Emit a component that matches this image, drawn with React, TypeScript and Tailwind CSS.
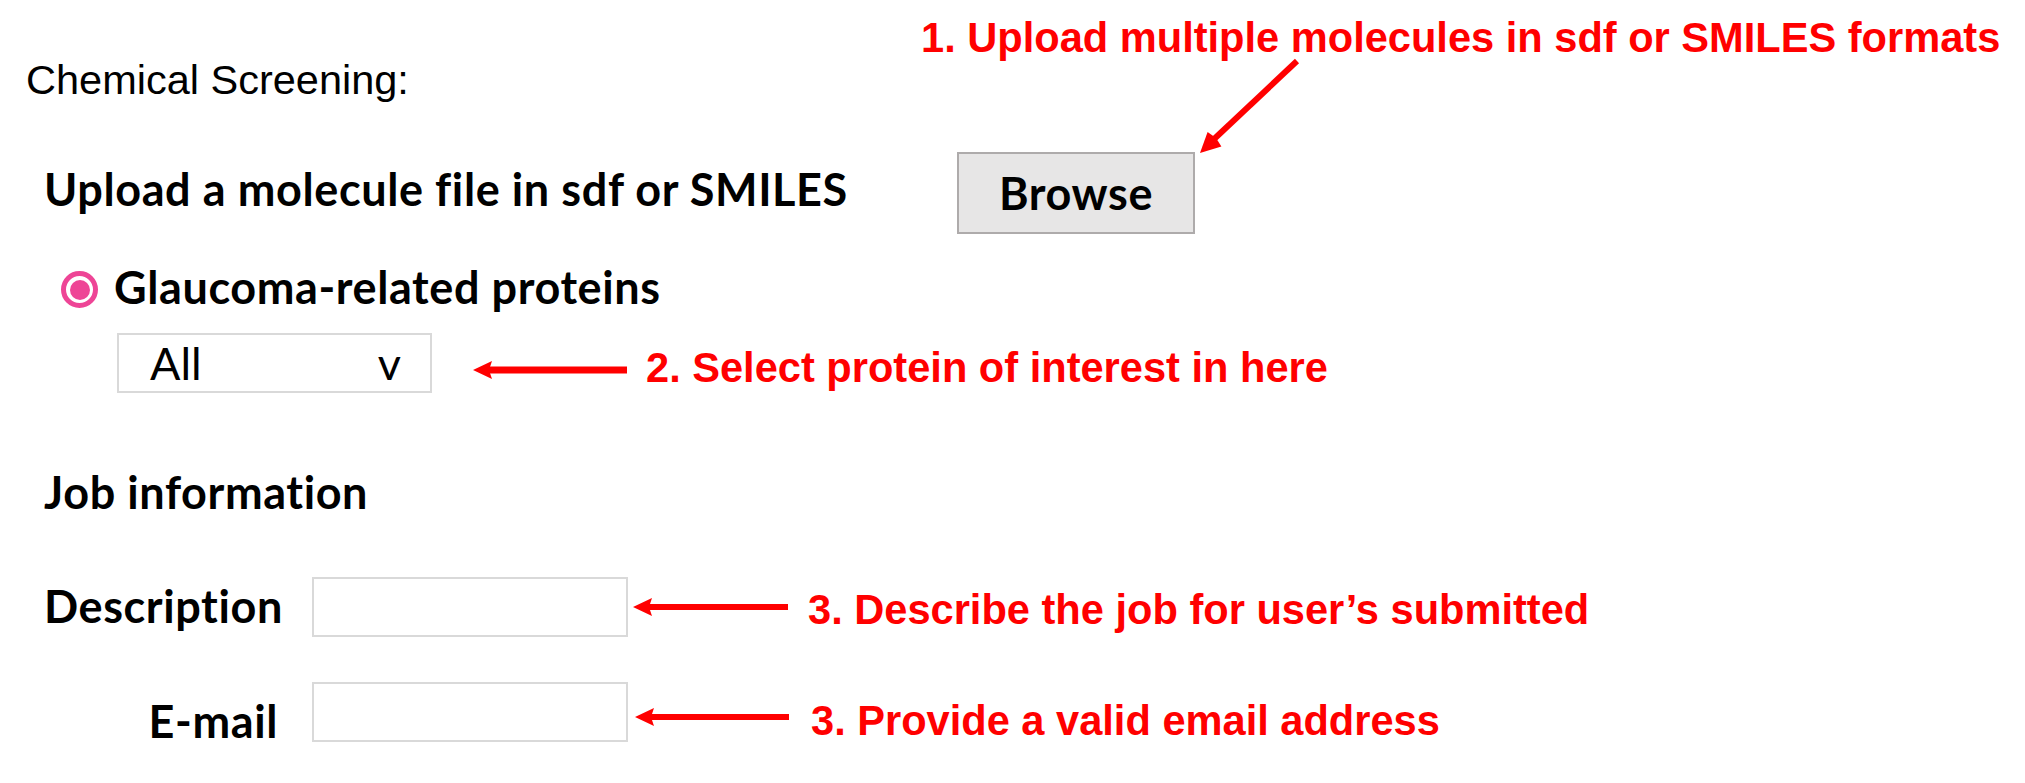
import React from 'react';

const RED = '#ff0000';

// left-pointing callout arrow, drawn as svg
function LeftArrow({ width, thick = 6 }: { width: number; thick?: number }) {
  return (
    <svg width={width} height={20} viewBox={`0 0 ${width} 20`} className="block shrink-0">
      <rect x={14} y={10 - thick / 2} width={width - 14} height={thick} fill={RED} />
      <polygon points="0,10 19,1 16,10 19,19" fill={RED} />
    </svg>
  );
}

function Note({ children }: { children: React.ReactNode }) {
  return (
    <div className="whitespace-nowrap font-['Liberation_Sans',Arial,sans-serif] font-bold text-[41.6px] leading-[42px] text-[#ff0000]">
      {children}
    </div>
  );
}

export default function App() {
  const label = "whitespace-nowrap font-['Lato',sans-serif] font-bold text-[45px] leading-[45px] tracking-[0.6px]";

  return (
    <div className="relative w-[2025px] h-[783px] overflow-hidden bg-white text-black">
      {/* callout 1 */}
      <div className="absolute left-[921px] top-[17px]">
        <Note>1. Upload multiple molecules in sdf or SMILES formats</Note>
      </div>
      <svg className="absolute left-[1190px] top-[50px]" width="120" height="115" viewBox="0 0 120 115">
        <line x1="107" y1="11" x2="22" y2="91" stroke={RED} strokeWidth="6" />
        <polygon points="10,103 31.4,96.5 26,88 17.6,81.9" fill={RED} />
      </svg>

      <div className="pt-[59px] pl-[26px] whitespace-nowrap font-['Liberation_Sans',Arial,sans-serif] text-[41.5px] leading-[42px]">
        Chemical Screening:
      </div>

      <div className="mt-[51px] flex items-start h-[82px]">
        <div className="w-[957px] pl-[44px] mt-[15px]">
          <span className={label}>Upload a molecule file in sdf or SMILES</span>
        </div>
        <button className="w-[238px] h-[82px] flex items-center justify-center border-2 border-[#aeabab] bg-[#e7e6e6]">
          <span className={label}>Browse</span>
        </button>
      </div>

      <div className="mt-[31px] flex items-start pl-[61px] gap-[16px]">
        <div className="mt-[6px] w-[37px] h-[37px] rounded-full border-[5px] border-[#ee4596] flex items-center justify-center">
          <div className="w-[20px] h-[20px] rounded-full bg-[#ee4596]" />
        </div>
        <div className={label}>Glaucoma-related proteins</div>
      </div>

      <div className="mt-[23px] flex items-start pl-[117px]">
        <div className="w-[315px] h-[60px] border-2 border-[#d9d9d9] flex items-center justify-between pl-[31px] pr-[29px] font-['Lato',sans-serif] text-[45px] leading-[45px]">
          <span>All</span>
          <span>v</span>
        </div>
        <div className="ml-[41px] mt-[27px]">
          <LeftArrow width={154} thick={7} />
        </div>
        <div className="ml-[19px] mt-[14px]">
          <Note>2. Select protein of interest in here</Note>
        </div>
      </div>

      <div className={`mt-[77px] pl-[44px] ${label}`}>Job information</div>

      <div className="mt-[62px] flex items-start pl-[44px]">
        <div className={`w-[234px] text-right mt-[7px] ${label}`}>Description</div>
        <div className="ml-[34px] w-[316px] h-[60px] border-2 border-[#d9d9d9] bg-white" />
        <div className="ml-[5px] mt-[20px]">
          <LeftArrow width={155} />
        </div>
        <div className="ml-[20px] mt-[12px]">
          <Note>3. Describe the job for user’s submitted</Note>
        </div>
      </div>

      <div className="mt-[45px] flex items-start pl-[44px]">
        <div className={`w-[234px] text-right mt-[17px] ${label}`}>E-mail</div>
        <div className="ml-[34px] w-[316px] h-[60px] border-2 border-[#d9d9d9] bg-white" />
        <div className="ml-[7px] mt-[25px]">
          <LeftArrow width={154} />
        </div>
        <div className="ml-[22px] mt-[18px]">
          <Note>3. Provide a valid email address</Note>
        </div>
      </div>
    </div>
  );
}
